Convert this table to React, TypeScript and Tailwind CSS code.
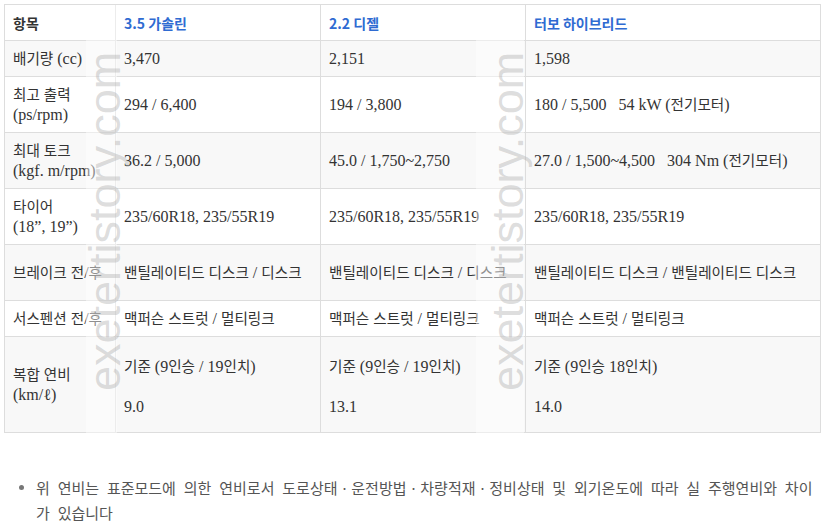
import type { ReactNode } from "react";

const HANGUL = /([\uAC00-\uD7A3\u3131-\u318E]+)/;

// serif for latin, sans for hangul runs (kept short so the line box stays 20px)
const Mix = ({ text }: { text: string }) => (
  <>
    {text.split(HANGUL).map((part, i) =>
      HANGUL.test(part) ? (
        <span key={i} className="font-['Noto_Sans_CJK_KR'] text-[14.6px] leading-[16px]">
          {part}
        </span>
      ) : (
        part
      )
    )}
  </>
);

const Lines = ({ lines }: { lines: string[] }) => (
  <>
    {lines.map((l, i) => (
      <span key={i}>
        {i > 0 && <br />}
        <Mix text={l} />
      </span>
    ))}
  </>
);

interface SpecRow {
  label: string[];
  values: string[][];
  height?: string;
}

const rows: SpecRow[] = [
  { label: ["배기량 (cc)"], values: [["3,470"], ["2,151"], ["1,598"]] },
  {
    label: ["최고 출력", "(ps/rpm)"],
    values: [["294 / 6,400"], ["194 / 3,800"], ["180 / 5,500\u00a0\u00a0 54 kW (전기모터)"]],
  },
  {
    label: ["최대 토크", "(kgf. m/rpm)"],
    values: [["36.2 / 5,000"], ["45.0 / 1,750~2,750"], ["27.0 / 1,500~4,500\u00a0\u00a0 304 Nm (전기모터)"]],
  },
  {
    label: ["타이어", "(18”, 19”)"],
    values: [["235/60R18, 235/55R19"], ["235/60R18, 235/55R19"], ["235/60R18, 235/55R19"]],
  },
  {
    label: ["브레이크 전/후"],
    values: [["밴틸레이티드 디스크 / 디스크"], ["밴틸레이티드 디스크 / 디스크"], ["밴틸레이티드 디스크 / 밴틸레이티드 디스크"]],
    height: "h-[56px]",
  },
  {
    label: ["서스펜션 전/후"],
    values: [["맥퍼슨 스트럿 / 멀티링크"], ["맥퍼슨 스트럿 / 멀티링크"], ["맥퍼슨 스트럿 / 멀티링크"]],
  },
];

const Cell = ({ children }: { children: ReactNode }) => (
  <td className="border border-[#dddddd] px-2 py-[7.5px] align-middle leading-5">{children}</td>
);

const Watermark = () => (
  <svg className="pointer-events-none absolute left-0 top-0" width="823" height="440">
    <rect x="86" y="5" width="31" height="428" fill="#ffffff" fillOpacity="0.45" />
    <rect x="476" y="5" width="48" height="428" fill="#ffffff" fillOpacity="0.45" />
    <text
      x="120"
      y="391"
      transform="rotate(-90 120 391)"
      fontFamily="'Liberation Sans', Arial, sans-serif"
      fontSize="45"
      fill="#a8a8a8"
      fillOpacity="0.4"
    >
      exetertistory.com
    </text>
    <text
      x="523"
      y="391"
      transform="rotate(-90 523 391)"
      fontFamily="'Liberation Sans', Arial, sans-serif"
      fontSize="45"
      fill="#a8a8a8"
      fillOpacity="0.4"
    >
      exetertistory.com
    </text>
  </svg>
);

export default function App() {
  return (
    <div className="relative w-[823px] h-[532px] overflow-hidden bg-white text-[#333333] font-['Liberation_Serif','Noto_Sans_CJK_KR',serif] text-[16px]">
      <table className="ml-1 mt-1 w-[816px] table-fixed border-collapse">
        <colgroup>
          <col className="w-[111px]" />
          <col className="w-[205px]" />
          <col className="w-[205px]" />
          <col className="w-[295px]" />
        </colgroup>
        <thead>
          <tr className="bg-white font-['Noto_Sans_CJK_KR',sans-serif] text-[14px] font-bold">
            <th className="border border-[#dddddd] px-2 py-[7.5px] text-left leading-5">항목</th>
            <th className="border border-[#dddddd] px-2 py-[7.5px] text-left leading-5 text-[#2f6bd2]">3.5 가솔린</th>
            <th className="border border-[#dddddd] px-2 py-[7.5px] text-left leading-5 text-[#2f6bd2]">2.2 디젤</th>
            <th className="border border-[#dddddd] px-2 py-[7.5px] text-left leading-5 text-[#2f6bd2]">터보 하이브리드</th>
          </tr>
        </thead>
        <tbody>
          {rows.map((row, i) => (
            <tr key={i} className={`${i % 2 === 0 ? "bg-[#f8f8f8]" : "bg-white"} ${row.height ?? ""}`}>
              <Cell>
                <Lines lines={row.label} />
              </Cell>
              {row.values.map((v, j) => (
                <Cell key={j}>
                  <Lines lines={v} />
                </Cell>
              ))}
            </tr>
          ))}
          <tr className="h-[96px] bg-[#f8f8f8]">
            <Cell>
              <Lines lines={["복합 연비", "(km/ℓ)"]} />
            </Cell>
            {[
              ["기준 (9인승 / 19인치)", "9.0"],
              ["기준 (9인승 / 19인치)", "13.1"],
              ["기준 (9인승 18인치)", "14.0"],
            ].map(([top, value], j) => (
              <Cell key={j}>
                <div className="pt-1">
                  <Mix text={top} />
                </div>
                <div className="mt-5">{value}</div>
              </Cell>
            ))}
          </tr>
        </tbody>
      </table>

      <ul className="mt-[42px] pl-[19px]">
        <li className="flex items-start">
          <span className="mt-[10px] h-[5px] w-[5px] shrink-0 rounded-full bg-[#777777]" />
          <p className="ml-[12px] w-[790px] font-['Noto_Sans_CJK_KR',sans-serif] text-[15px] leading-[25px] text-[#555555] [word-spacing:4.5px]">
            위 연비는 표준모드에 의한 연비로서 도로상태ㆍ운전방법ㆍ차량적재ㆍ정비상태 및 외기온도에 따라 실 주행연비와 차이
            <br />가 있습니다
          </p>
        </li>
      </ul>

      <Watermark />
    </div>
  );
}
